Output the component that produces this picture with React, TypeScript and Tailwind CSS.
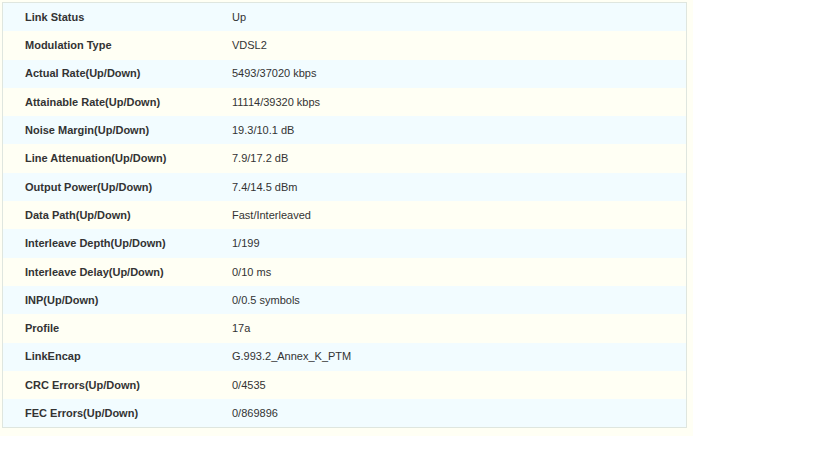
import React from "react";

const rows: [string, string][] = [
  ["Link Status", "Up"],
  ["Modulation Type", "VDSL2"],
  ["Actual Rate(Up/Down)", "5493/37020 kbps"],
  ["Attainable Rate(Up/Down)", "11114/39320 kbps"],
  ["Noise Margin(Up/Down)", "19.3/10.1 dB"],
  ["Line Attenuation(Up/Down)", "7.9/17.2 dB"],
  ["Output Power(Up/Down)", "7.4/14.5 dBm"],
  ["Data Path(Up/Down)", "Fast/Interleaved"],
  ["Interleave Depth(Up/Down)", "1/199"],
  ["Interleave Delay(Up/Down)", "0/10 ms"],
  ["INP(Up/Down)", "0/0.5 symbols"],
  ["Profile", "17a"],
  ["LinkEncap", "G.993.2_Annex_K_PTM"],
  ["CRC Errors(Up/Down)", "0/4535"],
  ["FEC Errors(Up/Down)", "0/869896"],
];

export default function App() {
  return (
    <div className="w-[819px] h-[460px] bg-white" style={{ fontFamily: '"Liberation Sans", Arial, sans-serif' }}>
      <div className="w-[693px] bg-[#fffff4] pt-[2px] pl-[2px] pr-[6px] pb-[8px]">
        <div className="border border-[#dfe6df]">
          {rows.map(([k, v], i) => (
            <div
              key={k}
              className={`flex items-center h-[28.3px] text-[11px] text-[#333] ${i % 2 === 0 ? "bg-[#f2fcff]" : "bg-[#fffff4]"}`}
            >
              <div className="w-[229px] pl-[22px] font-bold">{k}</div>
              <div>{v}</div>
            </div>
          ))}
        </div>
      </div>
    </div>
  );
}
